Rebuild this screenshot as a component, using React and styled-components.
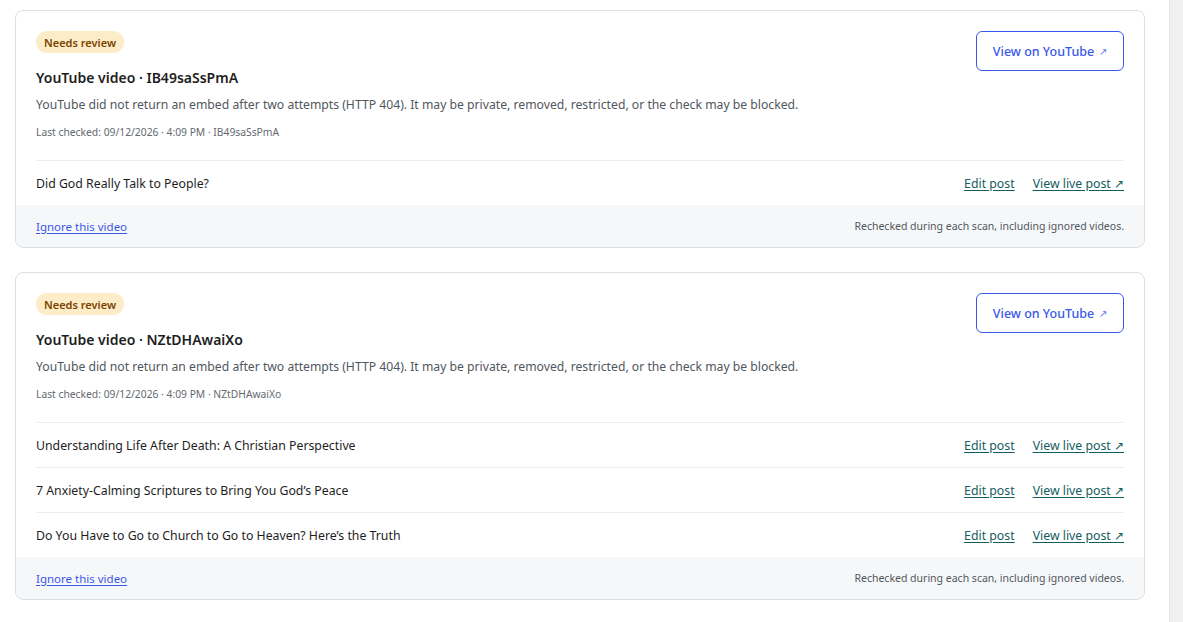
import styled, { createGlobalStyle } from 'styled-components';

const GlobalStyle = createGlobalStyle`
  body {
    margin: 0;
    background: #fff;
    font-family: "Noto Sans", "Open Sans", sans-serif;
    color: #1e1e1e;
  }
`;

const Shell = styled.div`
  display: flex;
  min-height: 100vh;
`;

const Page = styled.main`
  flex: 1;
  min-width: 0;
  padding: 10px 24px 20px 15px;
  display: flex;
  flex-direction: column;
  gap: 24px;
`;

// window scroll track along the right edge
const ScrollRail = styled.div`
  flex: 0 0 14px;
  box-sizing: border-box;
  background: #f0f0f0;
  border-left: 1px solid #e6e6e6;
`;

const Card = styled.section`
  border: 1px solid #dcdfe4;
  border-radius: 8px;
  background: #fff;
  overflow: hidden;
`;

const Body = styled.div`
  padding: 20px 20px 0;
`;

const Header = styled.div`
  display: flex;
  justify-content: space-between;
  align-items: flex-start;
  gap: 24px;
  padding-bottom: 19px;
`;

const Info = styled.div`
  display: flex;
  flex-direction: column;
  align-items: flex-start;
`;

const Badge = styled.span`
  display: inline-flex;
  align-items: center;
  height: 22px;
  padding: 0 8px;
  border-radius: 11px;
  background: #fdecc8;
  color: #7a4300;
  font-size: 11px;
  font-weight: 600;
`;

const Title = styled.h3`
  margin: 14px 0 0;
  font-size: 14px;
  font-weight: 600;
  line-height: 22px;
  color: #1e1e1e;
`;

const Description = styled.p`
  margin: 5px 0 0;
  font-size: 12.2px;
  line-height: 22px;
  color: #50575e;
`;

const Meta = styled.div`
  margin-top: 7px;
  font-size: 10.3px;
  line-height: 18px;
  color: #646970;
`;

const YouTubeButton = styled.a`
  flex-shrink: 0;
  display: inline-flex;
  align-items: center;
  justify-content: center;
  gap: 5px;
  width: 148px;
  height: 40px;
  box-sizing: border-box;
  border: 1px solid #3858e9;
  border-radius: 6px;
  color: #3858e9;
  font-size: 12.5px;
  font-weight: 500;
  text-decoration: none;
`;

const Arrow = styled.span`
  font-size: 10px;
  opacity: 0.85;
`;

const PostRow = styled.div`
  display: flex;
  align-items: center;
  justify-content: space-between;
  box-sizing: border-box;
  height: 45px;
  border-top: 1px solid #e9ecf0;
  font-size: 12.3px;
  color: #1e1e1e;
`;

const PostLinks = styled.div`
  display: flex;
  gap: 18px;
`;

const PostLink = styled.a`
  color: #135e5e;
  text-decoration: underline;
  text-underline-offset: 2px;
  font-size: 12.3px;
`;

const Footer = styled.div`
  display: flex;
  align-items: center;
  justify-content: space-between;
  height: 42px;
  padding: 0 20px;
  background: #f6f7f9;
`;

const IgnoreLink = styled.a`
  color: #3858e9;
  font-size: 11.5px;
  text-decoration: underline;
  text-underline-offset: 2px;
`;

const FooterNote = styled.span`
  font-size: 10.5px;
  color: #50575e;
`;

const videos = [
  {
    id: 'IB49saSsPmA',
    checked: '09/12/2026 · 4:09 PM',
    posts: ['Did God Really Talk to People?'],
  },
  {
    id: 'NZtDHAwaiXo',
    checked: '09/12/2026 · 4:09 PM',
    posts: [
      'Understanding Life After Death: A Christian Perspective',
      '7 Anxiety-Calming Scriptures to Bring You God’s Peace',
      'Do You Have to Go to Church to Go to Heaven? Here’s the Truth',
    ],
  },
];

function VideoCard({ video }) {
  return (
    <Card>
      <Body>
        <Header>
          <Info>
            <Badge>Needs review</Badge>
            <Title>YouTube video · {video.id}</Title>
            <Description>
              YouTube did not return an embed after two attempts (HTTP 404). It may be private,
              removed, restricted, or the check may be blocked.
            </Description>
            <Meta>
              Last checked: {video.checked} · {video.id}
            </Meta>
          </Info>
          <YouTubeButton href="#">
            View on YouTube <Arrow>↗</Arrow>
          </YouTubeButton>
        </Header>
        {video.posts.map((post) => (
          <PostRow key={post}>
            <span>{post}</span>
            <PostLinks>
              <PostLink href="#">Edit post</PostLink>
              <PostLink href="#">View live post ↗</PostLink>
            </PostLinks>
          </PostRow>
        ))}
      </Body>
      <Footer>
        <IgnoreLink href="#">Ignore this video</IgnoreLink>
        <FooterNote>Rechecked during each scan, including ignored videos.</FooterNote>
      </Footer>
    </Card>
  );
}

export default function App() {
  return (
    <>
      <GlobalStyle />
      <Shell>
        <Page>
          {videos.map((video) => (
            <VideoCard key={video.id} video={video} />
          ))}
        </Page>
        <ScrollRail />
      </Shell>
    </>
  );
}
